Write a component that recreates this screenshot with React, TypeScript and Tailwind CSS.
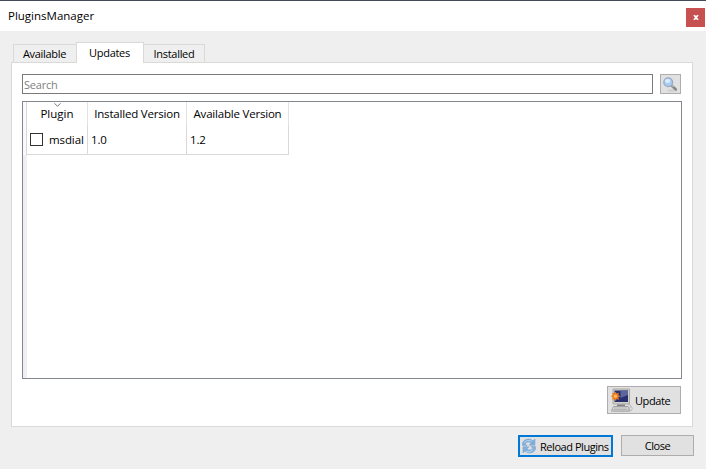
import React from "react";

function SearchIcon() {
  return (
    <svg className="shrink-0" width="17" height="17" viewBox="0 0 17 17">
      <ellipse cx="10" cy="14.5" rx="5" ry="1.2" fill="#cfcfcf" />
      <path d="M10 10 L13.8 13.4" stroke="#858585" strokeWidth="2.6" strokeLinecap="round" />
      <path d="M9.2 9.1 L11.5 11" stroke="#b9b9b9" strokeWidth="1.4" />
      <circle cx="6.2" cy="6.2" r="4.4" fill="#a9cdf2" stroke="#9aa9c1" strokeWidth="1.3" />
      <ellipse cx="5.6" cy="5" rx="2.6" ry="2" fill="#dceefd" />
    </svg>
  );
}

function ComputerIcon() {
  return (
    <svg className="shrink-0" width="23" height="25" viewBox="0 0 23 25">
      <ellipse cx="12" cy="23" rx="10" ry="1.2" fill="#cccccc" />
      <path d="M3 1h16.500v15H3z" fill="#d2d0ca" stroke="#aaa8a4" strokeWidth="1" />
      <path d="M4.500 2.500h13.500v11.500h-13.500z" fill="#28306f" />
      <path d="M10.500 2.500h7.500v4.500L10.500 10z" fill="#5c659c" />
      <path d="M7 16.500h8v2H7z" fill="#858585" />
      <path d="M3.500 18.500h14.500l1.500 4.500H1.500z" fill="#dedede" stroke="#a0a0a0" strokeWidth="1" />
      <path d="M4 20h13M3.500 21.500h14" stroke="#aaa" strokeWidth="0.8" />
      <path d="M18 16.500q3.500 0 2.500 3" stroke="#aaa" fill="none" strokeWidth=".8" />
      <ellipse cx="20.800" cy="20.500" rx="1.300" ry="1.900" fill="#e5e5e5" stroke="#aaa" strokeWidth=".7" />
      <path d="M5.500 4.200l1 1.900 2-.8-.8 2 1.900 1-1.900 1 .8 2-2-.8-1 1.900-1-1.900-2 .8.800-2-1.900-1 1.900-1-.8-2 2 .8z" fill="#ee7c1c" stroke="#ee7c1c" strokeWidth=".8" />
      <circle cx="5.500" cy="8.300" r="1.700" fill="#ffb850" />
    </svg>
  );
}

function ReloadIcon() {
  return (
    <svg className="shrink-0" width="16" height="16" viewBox="0 0 16 16">
      <path d="M1.500 7.500V4.800Q3 1 7.500 1q3 0 4.600 1.800L14 1v6.200H8l2-2.100Q8.800 4 7.200 4 5 4 4.200 6l2 1.500z" fill="#80aedb" stroke="#79a1cd" strokeWidth=".5" />
      <path d="M14.500 8.500v2.700Q13 15 8.500 15q-3 0-4.600-1.800L2 15V8.800h6l-2 2.100Q7.200 12 8.800 12q2.200 0 3-2l-2-1.500z" fill="#82b0dc" stroke="#79a1cd" strokeWidth=".5" />
      <path d="M3 4.500Q6 1.200 10.500 3M5 13.600q4 1.300 7.500-2" stroke="#b9d7f1" fill="none" />
    </svg>
  );
}

export default function App() {
  return (
    <div className="flex h-[469px] w-[706px] flex-col overflow-hidden bg-[#efefef] font-['Open_Sans','Noto_Sans',sans-serif] text-[11.5px] leading-4 text-black">
      <header className="flex h-[31px] shrink-0 justify-between border-t border-[#414b57] bg-white">
        <h1 className="pl-2 pt-[7px] text-[11.5px] leading-4 font-normal">PluginsManager</h1>
        <button aria-label="Close window" className="mt-[7px] mr-px flex h-[19px] w-[19px] items-center justify-center bg-[#c75050]">
          <svg width="6" height="5" viewBox="0 0 6 5"><path d="M1 0L5 5M5 0L1 5" stroke="#fff" strokeWidth="1.7" /></svg>
        </button>
      </header>
      <nav className="flex h-[31px] shrink-0 items-end pl-[13px] text-[11px]">
        <button className="h-[18px] w-[63px] border border-r-0 border-b-0 border-[#d9d9d9] pr-px leading-[18px] tracking-[-0.3px]">Available</button>
        <button className="z-10 -mb-px h-[21px] w-[68px] border border-b-0 border-[#d9d9d9] bg-white pr-px pb-[2px] leading-[17px] tracking-[-0.3px]">Updates</button>
        <button className="h-[18px] w-[61px] border border-b-0 border-l-0 border-[#d9d9d9] leading-[18px] tracking-[-0.3px]">Installed</button>
      </nav>
      <main className="ml-[11px] flex h-[365px] w-[682px] shrink-0 flex-col border border-[#d9d9d9] bg-white px-[10px] pt-[11px]">
        <div className="flex h-5 gap-[7px]">
          <input placeholder="Search" className="h-5 w-[631px] border border-[#7a7a7a] bg-white px-px pt-px pb-px text-[11px] leading-4 tracking-[-0.2px] placeholder:text-[#808080]" />
          <button aria-label="Search" className="flex h-5 w-[21px] items-center justify-center border border-[#adadad] bg-[#e1e1e1]"><SearchIcon /></button>
        </div>
        <section className="mt-[7px] flex h-[278px] w-[660px] border border-[#828790]">
          <div className="w-1 shrink-0 bg-[#efefef]">
            <div className="h-[53px] border-r border-[#d9d9d9] bg-[#fafafb]" />
          </div>
          <div className="grid h-[53px] grid-cols-[61px_99px_102px] grid-rows-[23px_30px]">
            <div className="flex flex-col items-center border-r border-[#e3e3e3]">
              <svg className="mt-px shrink-0" width="7" height="4" viewBox="0 0 7 4"><path d="M.5 .3L3.500 3.300 6.500 .3" fill="none" stroke="#777" /></svg>
              <span className="-mt-px leading-4">Plugin</span>
            </div>
            <div className="border-r border-[#e3e3e3] pt-1 text-center tracking-[-0.2px]">Installed Version</div>
            <div className="border-r border-[#e3e3e3] pt-1 text-center tracking-[-0.2px]">Available Version</div>
            <div className="flex items-center gap-[6px] border-r border-b border-[#d9d9d9] pl-[3px]">
              <span className="h-[13px] w-[13px] shrink-0 border border-[#333]" />
              <span className="tracking-[-0.1px]">msdial</span>
            </div>
            <div className="border-r border-b border-[#d9d9d9] pt-[7px] pl-[3px] tracking-[-0.2px]">1.0</div>
            <div className="border-r border-b border-[#d9d9d9] pt-[7px] pl-[3px] tracking-[-0.2px]">1.2</div>
          </div>
        </section>
        <button className="mt-[7px] ml-auto mr-px flex h-7 w-[74px] shrink-0 items-center border border-[#adadad] bg-[#e1e1e1] pl-[2px] text-[11px]">
          <ComputerIcon /><span className="mt-[2px] ml-[2px] tracking-[-0.4px]">Update</span>
        </button>
      </main>
      <footer className="flex justify-end gap-2 pt-2 pr-3 text-[11px]">
        <button className="flex h-[22px] w-[95px] items-center border-2 border-[#0078d7] bg-[#e1e1e1] pl-px">
          <ReloadIcon /><span className="mt-[2px] ml-[3px] whitespace-nowrap tracking-[-0.45px]">Reload Plugins</span>
        </button>
        <button className="h-[21px] w-[73px] border border-[#adadad] bg-[#e1e1e1] leading-[19px] tracking-[-0.4px]">Close</button>
      </footer>
    </div>
  );
}
